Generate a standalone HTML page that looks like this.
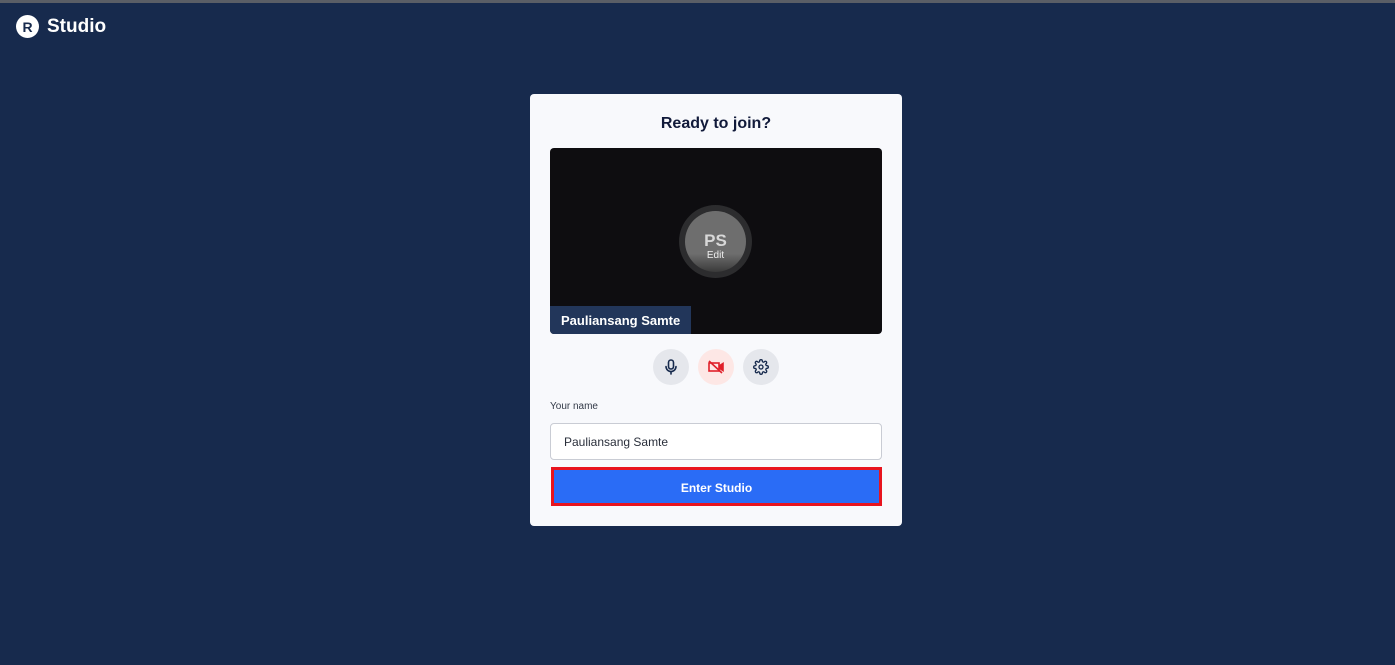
<!DOCTYPE html>
<html><head><meta charset="utf-8"><style>
*{box-sizing:border-box;margin:0;padding:0}
body{width:1395px;height:665px;background:#172a4d;font-family:"Liberation Sans",sans-serif;position:relative;overflow:hidden}
.top{position:absolute;left:0;top:0;width:1395px;height:3px;background:#5a5e66}
.logo{position:absolute;left:16px;top:15px;display:flex;align-items:center;color:#fff;font-size:19px;font-weight:bold}
.logo .c{width:23px;height:23px;border-radius:50%;background:#fff;color:#172a4d;font-size:14px;font-weight:bold;display:flex;align-items:center;justify-content:center;margin-right:8px}
.card{position:absolute;left:530px;top:94px;width:372px;height:432px;background:#f8f9fc;border-radius:4px}
h1{position:absolute;top:21px;width:100%;text-align:center;font-size:16px;color:#111a3a;font-weight:bold}
.vid{position:absolute;left:20px;top:54px;width:332px;height:186px;background:#0e0d10;border-radius:4px;overflow:hidden}
.av{position:absolute;left:129px;top:57px;width:73px;height:73px;border-radius:50%;background:#2c2c2e;}
.av .in{position:absolute;left:6px;top:6px;width:61px;height:61px;border-radius:50%;background:linear-gradient(#6e6e6e 0,#6e6e6e 70%,#3a3a3a 100%);color:#d8d8d8;text-align:center}
.av .ps{font-size:17px;font-weight:bold;margin-top:21px;line-height:18px}
.av .ed{font-size:10px;color:#eee;line-height:11px}
.nm{position:absolute;left:0;bottom:0;height:28px;padding:0 11px;background:#22365a;color:#fff;font-size:13px;font-weight:bold;line-height:29px}
.btns{position:absolute;top:255px;left:123px;display:flex;gap:9px}
.b{width:36px;height:36px;border-radius:50%;background:#e5e7ec;display:flex;align-items:center;justify-content:center}
.b.r{background:#fde7e5}
.lab{position:absolute;left:20px;top:307px;font-size:10px;color:#333a48;line-height:12px}
.inp{position:absolute;left:20px;top:329px;width:332px;height:37px;background:#fff;border:1px solid #c9ccd4;border-radius:4px;font-size:12px;color:#2a2f3b;padding-left:13px;line-height:36px}
.go{position:absolute;left:21px;top:373px;width:331px;height:39px;background:#2a6cf6;border:3px solid #e8141e;color:#fff;font-size:12px;font-weight:bold;text-align:center;line-height:36px}
</style></head><body>
<div class="top"></div>
<div class="logo"><div class="c">R</div>Studio</div>
<div class="card">
<h1>Ready to join?</h1>
<div class="vid">
<div class="av"><div class="in"><div class="ps">PS</div><div class="ed">Edit</div></div></div>
<div class="nm">Pauliansang Samte</div>
</div>
<div class="btns">
<div class="b"><svg width="14" height="16" viewBox="0 0 14 16" fill="none" stroke="#172a4d" stroke-width="1.6" stroke-linecap="round"><rect x="4.5" y="1" width="5" height="9" rx="2.5"/><path d="M2 7.5a5 5 0 0 0 10 0M7 12.5V15"/></svg></div>
<div class="b r"><svg width="18" height="14" viewBox="0 0 18 14" fill="none" stroke="#e0202a" stroke-width="1.6"><rect x="2" y="3" width="10" height="8"/><path d="M12 6l4-2.5v7L12 8" fill="#e0202a"/><path d="M2 1l13 12"/></svg></div>
<div class="b"><svg width="16" height="16" viewBox="0 0 24 24" fill="none" stroke="#172a4d" stroke-width="2"><circle cx="12" cy="12" r="3"/><path d="M19.4 15a1.7 1.7 0 0 0 .3 1.8l.1.1a2 2 0 1 1-2.8 2.8l-.1-.1a1.7 1.7 0 0 0-1.8-.3 1.7 1.7 0 0 0-1 1.5V21a2 2 0 1 1-4 0v-.1a1.7 1.7 0 0 0-1.1-1.5 1.7 1.7 0 0 0-1.800.3l-.1.1a2 2 0 1 1-2.8-2.8l.1-.1a1.7 1.7 0 0 0 .3-1.8 1.7 1.7 0 0 0-1.5-1H3a2 2 0 1 1 0-4h.1a1.7 1.7 0 0 0 1.5-1.1 1.7 1.7 0 0 0-.3-1.8l-.1-.1a2 2 0 1 1 2.8-2.8l.1.1a1.7 1.7 0 0 0 1.8.3H9a1.7 1.7 0 0 0 1-1.5V3a2 2 0 1 1 4 0v.1a1.7 1.7 0 0 0 1 1.5 1.7 1.7 0 0 0 1.8-.3l.1-.1a2 2 0 1 1 2.8 2.8l-.1.1a1.7 1.7 0 0 0-.3 1.8V9a1.7 1.7 0 0 0 1.5 1H21a2 2 0 1 1 0 4h-.1a1.7 1.7 0 0 0-1.5 1z"/></svg></div>
</div>
<div class="lab">Your name</div>
<div class="inp">Pauliansang Samte</div>
<div class="go">Enter Studio</div>
</div>
</body></html>
